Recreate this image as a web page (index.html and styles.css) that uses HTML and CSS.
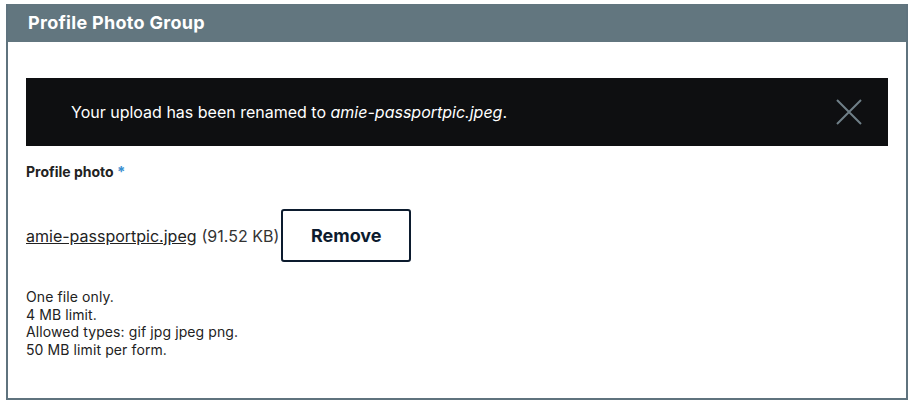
FILE: index.html
```html
<!DOCTYPE html>
<html lang="en">
<head>
<meta charset="utf-8">
<title>Profile Photo Group</title>
<link rel="stylesheet" href="styles.css">
</head>
<body>
<fieldset class="group">
  <legend class="group-title">Profile Photo Group</legend>
  <div class="group-body">
    <div class="message" role="status">
      <p class="message-text">Your upload has been renamed to <em>amie-passportpic.jpeg</em>.</p>
      <button class="message-close" type="button" aria-label="Dismiss">
        <svg width="26" height="26" viewBox="0 0 26 26" aria-hidden="true"><path d="M1 1 L25 25 M25 1 L1 25" stroke="#6f7f88" stroke-width="2" fill="none"/></svg>
      </button>
    </div>
    <div class="field">
      <div class="field-label">Profile photo <span class="required">*</span></div>
      <div class="file-row">
        <a class="file-link" href="#">amie-passportpic.jpeg</a>
        <span class="file-size">(91.52 KB)</span>
        <button class="remove-btn" type="button">Remove</button>
      </div>
      <div class="description">
        One file only.<br>
        4 MB limit.<br>
        Allowed types: gif jpg jpeg png.<br>
        50 MB limit per form.
      </div>
    </div>
  </div>
</fieldset>
</body>
</html>
```
FILE: styles.css
```css
html, body {
  margin: 0;
  padding: 0;
  background: #fff;
}
body {
  font-family: Inter, "Liberation Sans", sans-serif;
  color: #222;
  padding: 4px 5px 4px 6px;
}
.group {
  margin: 0;
  padding: 0;
  border: 2px solid #5f737e;
  border-top: 0;
  min-width: 0;
  height: 396px;
  box-sizing: border-box;
  display: block;
}
.group-title {
  float: left;
  width: 100%;
  box-sizing: border-box;
  margin: 0;
  padding: 0 0 0 20px;
  height: 38px;
  line-height: 38px;
  background: #62767f;
  color: #fff;
  font-size: 18px;
  letter-spacing: 0.3px;
  font-weight: 700;
}
.group-body {
  clear: both;
  padding: 36px 18px 0 18px;
}
.message {
  display: flex;
  align-items: center;
  justify-content: space-between;
  height: 68px;
  background: #0e0f11;
  padding: 0 26px 0 45px;
}
.message-text {
  margin: 0;
  color: #fff;
  font-size: 16px;
}
.message-close {
  background: none;
  border: 0;
  padding: 0;
  width: 26px;
  height: 26px;
  display: flex;
}
.field {
  padding-top: 18px;
}
.field-label {
  font-size: 14px;
  font-weight: 700;
  color: #222;
  line-height: 16px;
}
.required {
  color: #3a8fd0;
  font-size: 15px;
}
.file-row {
  display: flex;
  align-items: center;
  margin-top: 29px;
  font-size: 16px;
}
.file-link {
  color: #222;
  text-decoration: underline;
}
.file-size {
  margin-left: 5px;
  color: #333;
}
.remove-btn {
  margin-left: 2px;
  width: 130px;
  height: 53px;
  background: #fff;
  border: 2px solid #0c1b2e;
  border-radius: 3px;
  font-family: inherit;
  font-size: 18px;
  font-weight: 700;
  color: #0c1b2e;
}
.description {
  margin-top: 26px;
  font-size: 14px;
  letter-spacing: 0.1px;
  line-height: 17.5px;
  color: #222;
}
```
